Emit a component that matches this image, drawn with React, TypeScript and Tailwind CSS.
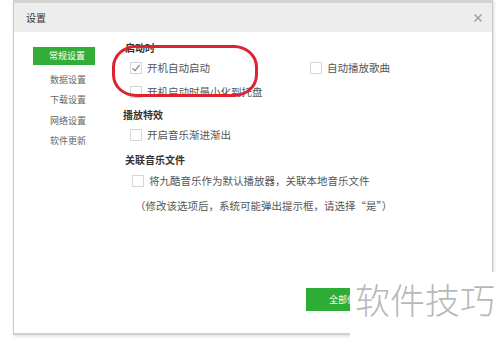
import React from "react";

const FONT = '"Noto Sans CJK SC", "Noto Sans", sans-serif';

function Box({ checked = false }: { checked?: boolean }) {
  return (
    <span className="w-[12px] h-[12px] border border-[#d6d6d6] bg-white flex items-center justify-center shrink-0">
      {checked && (
        <svg width="10" height="10" viewBox="0 0 10 10">
          <path d="M1.5 5.2 L4 7.6 L8.6 2" fill="none" stroke="#8a8a8a" strokeWidth="1.3" />
        </svg>
      )}
    </span>
  );
}

function Option({ label, checked }: { label: string; checked?: boolean }) {
  return (
    <div className="flex items-center gap-[5px] h-[14px] text-[10.5px] text-[#555] leading-none">
      <Box checked={checked} />
      <span>{label}</span>
    </div>
  );
}

const NAV = ["常规设置", "数据设置", "下载设置", "网络设置", "软件更新"];

export default function App() {
  return (
    <div
      className="relative w-[500px] h-[344px] bg-white overflow-hidden pl-[13px]"
      style={{ fontFamily: FONT }}
    >
      {/* dialog */}
      <div className="w-[480px] h-[335px] flex flex-col border-t-[3px] border-t-[#d2d2d2] border-x border-b-[2px] border-x-[#c8c8c8] border-b-[#d0d0d0] shadow-[1px_1px_3px_rgba(0,0,0,0.15)]">
        <div className="h-[29px] bg-[#ededed] flex items-center justify-between pl-[12px] pr-[9px] shrink-0">
          <span className="text-[10px] text-[#333]">设置</span>
          <svg width="10" height="10" viewBox="0 0 10 10">
            <path d="M1.5 1.5 L8.5 8.5 M8.5 1.5 L1.5 8.5" stroke="#9a9a9a" strokeWidth="1.4" />
          </svg>
        </div>

        <div className="flex flex-1 pl-[19px]">
          {/* sidebar */}
          <div className="w-[62px] pt-[15px] flex flex-col shrink-0">
            {NAV.map((n, i) => (
              <div
                key={n}
                className={
                  i === 0
                    ? "h-[18px] bg-[#31ad38] text-white text-[9px] flex items-center pl-[16px] mb-[4px]"
                    : "h-[20.5px] text-[#666] text-[9px] flex items-center pl-[17px]"
                }
              >
                {n}
              </div>
            ))}
          </div>

          {/* content */}
          <div className="flex-1 flex flex-col pl-[30px] pt-[9px] relative">
            <div className="h-[14px] text-[10px] font-bold text-[#333] leading-none flex items-center">启动时</div>
            <div className="mt-[6px] flex pl-[5px]">
              <div className="w-[180px]">
                <Option label="开机自动启动" checked />
              </div>
              <Option label="自动播放歌曲" />
            </div>
            <div className="mt-[10px] pl-[5px]">
              <Option label="开机启动时最小化到托盘" />
            </div>
            <div className="mt-[9px] h-[14px] text-[10px] font-bold text-[#333] leading-none flex items-center -ml-[2px]">播放特效</div>
            <div className="mt-[6px] pl-[5px]">
              <Option label="开启音乐渐进渐出" />
            </div>
            <div className="mt-[11px] h-[14px] text-[10px] font-bold text-[#333] leading-none flex items-center">关联音乐文件</div>
            <div className="mt-[7px] pl-[7px]">
              <Option label="将九酷音乐作为默认播放器，关联本地音乐文件" />
            </div>
            <div className="mt-[11px] pl-[10px] h-[14px] text-[10.5px] text-[#555] leading-none flex items-center">
              （修改该选项后，系统可能弹出提示框，请选择“是”）
            </div>

            <div className="mt-auto mb-[22px] pl-[181px]">
              <button className="w-[72px] h-[23px] bg-[#2ead36] text-white text-[9px] pl-[23px] text-left">
                全部保存
              </button>
            </div>
          </div>
        </div>
      </div>

      {/* red annotation */}
      <div className="absolute left-[112px] top-[45px] w-[146px] h-[52px] border-[3px] border-[#dc2430] rounded-[24px/22px]" />

      {/* watermark */}
      <div className="absolute left-[350px] top-[272px] w-[150px] h-[72px] bg-white flex items-start pt-[9px] pl-[5px]">
        <span className="text-[35px] leading-none text-[#b8b8b8]" style={{ fontWeight: 300 }}>
          软件技巧
        </span>
      </div>
    </div>
  );
}
